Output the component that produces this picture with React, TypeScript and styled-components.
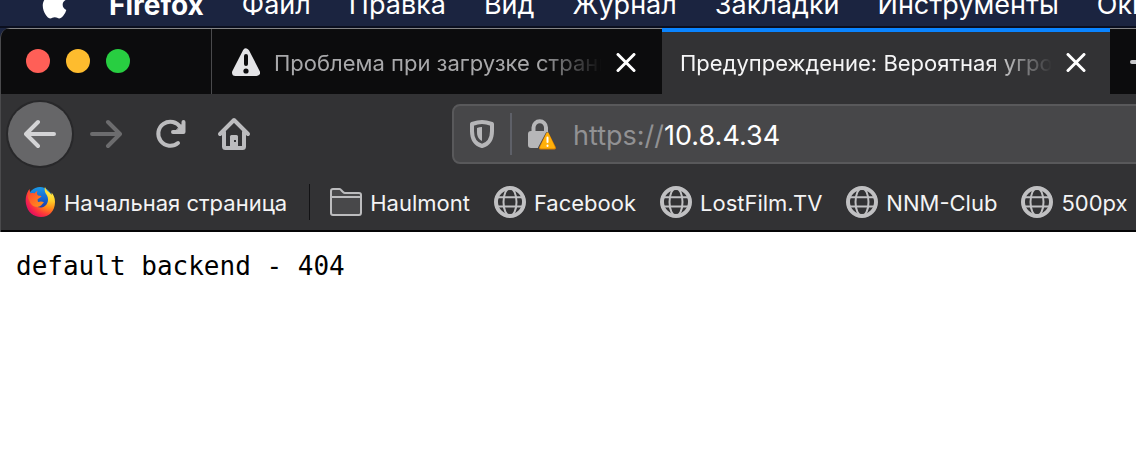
import React from "react";
import styled, { createGlobalStyle } from "styled-components";

const Global = createGlobalStyle`
  *, *::before, *::after { box-sizing: border-box; }
  body {
    margin: 0;
    background: #fff;
    font-family: Inter, "Noto Sans", "Liberation Sans", sans-serif;
  }
  button {
    padding: 0;
    border: 0;
    background: none;
    color: inherit;
    font: inherit;
  }
  a { color: inherit; text-decoration: none; }
  svg { display: block; flex: none; }
`;

const Screen = styled.div`
  overflow: hidden;
  background: #1b2440;
`;

const MenuBar = styled.nav`
  display: flex;
  align-items: flex-end;
  gap: 38px;
  height: 28px;
  padding: 0 0 5px 41px;
  overflow: hidden;
  background: #1b2440;
  border-bottom: 2px solid #0b0f1f;
  color: #fff;
`;

const MenuItem = styled.button<{ $bold?: boolean }>`
  flex: none;
  font-size: ${(p) => (p.$bold ? 28 : 27)}px;
  line-height: 32px;
  font-weight: ${(p) => (p.$bold ? 700 : 400)};
`;

const BrowserWindow = styled.div`
  overflow: hidden;
  border-left: 1px solid #4a4a4c;
  border-radius: 10px 0 0 0;
  background: #323234;
`;

const TabStrip = styled.div`
  display: flex;
  height: 66px;
  background: #0c0c0d;
  border-top: 1px solid #858587;
`;

const WindowControls = styled.div`
  display: flex;
  flex: none;
  align-items: center;
  gap: 16px;
  width: 211px;
  padding: 0 0 2px 25px;
  border-right: 1px solid #4a4a4c;
`;

const Light = styled.button<{ $color: string }>`
  width: 24px;
  height: 24px;
  border-radius: 50%;
  background: ${(p) => p.$color};
`;

const Tab = styled.div<{ $active?: boolean }>`
  display: flex;
  flex: 0 0 auto;
  align-items: center;
  gap: 14px;
  width: ${(p) => (p.$active ? 448 : 450)}px;
  margin-top: -1px;
  padding: ${(p) => (p.$active ? "0 24px 0 18px" : "3px 26px 0 20px")};
  border-top: ${(p) => (p.$active ? "4px solid #0a84ff" : "1px solid #858587")};
  background: ${(p) => (p.$active ? "#323234" : "#0c0c0d")};
  color: ${(p) => (p.$active ? "#f5f5f6" : "#a8a8aa")};
`;

const TabTitle = styled.button`
  flex: 1;
  min-width: 0;
  overflow: hidden;
  font-size: 22px;
  line-height: 32px;
  text-align: left;
  white-space: nowrap;
  mask-image: linear-gradient(to left, transparent, #000 64px);
`;

const IconButton = styled.button`
  display: flex;
  flex: none;
  color: #fff;
`;

const NewTab = styled(IconButton)`
  align-items: center;
  padding-left: 19px;
  color: #c8c8ca;
`;

const Toolbar = styled.div`
  display: flex;
  align-items: center;
  height: 80px;
  padding-left: 7px;
`;

const NavButtons = styled.div`
  display: flex;
  flex: none;
  align-items: center;
  width: 444px;
`;

const NavButton = styled.button<{ $round?: boolean; $muted?: boolean }>`
  display: flex;
  align-items: center;
  justify-content: center;
  width: 64px;
  height: 64px;
  margin-right: ${(p) => (p.$round ? 2 : 0)}px;
  border-radius: 50%;
  background: ${(p) => (p.$round ? "#666668" : "transparent")};
  box-shadow: ${(p) => (p.$round ? "0 0 0 2px #28282a" : "none")};
  color: ${(p) => (p.$muted ? "#6c6c6e" : p.$round ? "#d4d4d6" : "#bcbcbe")};
`;

const AddressBar = styled.div`
  display: flex;
  flex: 1;
  align-items: center;
  min-width: 0;
  height: 60px;
  margin-right: -8px;
  padding-left: 15px;
  border: 2px solid #59595b;
  border-radius: 8px;
  background: #474749;
`;

const AddressDivider = styled.span`
  width: 2px;
  height: 42px;
  margin: 0 15px 0 15px;
  background: #5e6068;
`;

const Scheme = styled.label`
  margin-left: 16px;
  padding-top: 4px;
  color: #919193;
  font-size: 27px;
  line-height: 36px;
`;

const Address = styled.input`
  flex: 1;
  min-width: 0;
  padding: 4px 0 0;
  border: 0;
  outline: 0;
  background: transparent;
  color: #fff;
  font: 27px/36px Inter, "Liberation Sans", sans-serif;
`;

const Bookmarks = styled.nav`
  display: flex;
  align-items: center;
  gap: 24px;
  height: 58px;
  padding-left: 24px;
  overflow: hidden;
  border-bottom: 2px solid #050506;
`;

const Bookmark = styled.a`
  display: flex;
  flex: none;
  align-items: center;
  gap: 8px;
  color: #f4f4f5;
  font-size: 22px;
  line-height: 32px;
`;

const BookmarkLabel = styled.span`
  padding-top: 2px;
`;

const BookmarkDivider = styled.span`
  flex: none;
  width: 1px;
  height: 36px;
  margin: 0 -4px 0 -2px;
  background: #121214;
`;

const Content = styled.main`
  min-height: calc(100vh - 232px);
  padding: 16px;
  background: #fff;
`;

const Message = styled.pre`
  margin: 0;
  color: #000;
  font: 26px/36px "DejaVu Sans Mono", "Liberation Mono", monospace;
`;

const AppleLogo = () => (
  <svg width="30" height="32" viewBox="0 0 32 34" fill="#fff" aria-hidden="true">
    <path d="M20.4 1c.2 2-.6 3.800-1.700 5.100-1.200 1.400-2.900 2.300-4.600 2.200-.2-1.900.7-3.800 1.700-5 1.200-1.300 3.100-2.200 4.600-2.300z" />
    <path d="M26.200 11.700c-2 1.200-3.100 3-3.100 5.100 0 2.500 1.500 4.500 3.900 5.500-.6 2-1.500 3.700-2.700 5.400-1.300 1.900-2.600 3.600-4.700 3.600-2 0-2.600-1.200-4.900-1.200s-3 1.200-4.900 1.300c-2 .1-3.500-2-4.800-3.900C2.300 23.600.5 16.700 3.200 12.200c1.300-2.300 3.700-3.700 6.200-3.700 2.100 0 3.700 1.300 5.200 1.300 1.400 0 3.500-1.500 6-1.300 1.100 0 3.800.4 5.600 3.200z" />
  </svg>
);

const WarningIcon = () => (
  <svg width="28" height="30" viewBox="0 0 28 30" aria-hidden="true">
    <path d="M14 4L24.500 24.500H3.500Z" fill="#e4e4e6" stroke="#e4e4e6" strokeWidth="7" strokeLinejoin="round" />
    <path d="M14 8V16" stroke="#0c0c0d" strokeWidth="4" strokeLinecap="round" />
    <circle cx="14" cy="23" r="2.600" fill="#0c0c0d" />
  </svg>
);

const CloseIcon = () => (
  <svg width="20" height="20" viewBox="0 0 20 20" stroke="currentColor" strokeWidth="3" strokeLinecap="round" aria-hidden="true">
    <path d="M2 1.500L18 17.500M18 1.500L2 17.500" />
  </svg>
);

const PlusIcon = () => (
  <svg width="26" height="26" viewBox="0 0 26 26" stroke="currentColor" strokeWidth="4" strokeLinecap="round" aria-hidden="true">
    <path d="M3 13H24M13 2V24" />
  </svg>
);

const ArrowIcon = ({ forward }: { forward?: boolean }) => (
  <svg width="32" height="32" viewBox="0 0 32 32" fill="none" stroke="currentColor" strokeWidth="4" strokeLinecap="round" strokeLinejoin="round" aria-hidden="true">
    <path d={forward ? "M2 16H29M18 4L30 16L18 28" : "M30 16H3M14 4L2 16L14 28"} />
  </svg>
);

const ReloadIcon = () => (
  <svg width="32" height="32" viewBox="0 0 32 32" fill="none" stroke="currentColor" strokeLinecap="round" strokeLinejoin="round" aria-hidden="true">
    <path d="M24 25A12 12 0 1 1 26.500 9.500" strokeWidth="4" />
    <path d="M29.500 4V14H19" strokeWidth="4" />
    <path d="M27.500 7L29 14H21Z" fill="currentColor" strokeWidth="1" />
  </svg>
);

const HomeIcon = () => (
  <svg width="34" height="34" viewBox="0 0 34 34" fill="none" stroke="currentColor" strokeLinecap="round" strokeLinejoin="round" aria-hidden="true">
    <path d="M3 17L17 3L31 17" strokeWidth="4" />
    <path d="M7 15V29.500Q7 31 8.500 31H25.500Q27 31 27 29.500V15" strokeWidth="4" />
    <path d="M13 32V19.500Q13 18 14.500 18H19.500Q21 18 21 19.500V32Z" fill="currentColor" stroke="none" />
    <rect x="17" y="23" width="2" height="2" fill="#323234" stroke="none" />
  </svg>
);

const ShieldIcon = () => (
  <svg width="26" height="30" viewBox="0 0 26 30" fill="none" aria-hidden="true">
    <path d="M13 3C9 3 6 4 3 5V12C3 19 6 25 13 27C20 25 23 19 23 12V5C20 4 17 3 13 3Z" stroke="#b6b6b8" strokeWidth="4" strokeLinejoin="round" />
    <path d="M13 8Q10 8 8 9V13C8 17 9.500 20.500 13 22Z" fill="#b6b6b8" />
  </svg>
);

const LockIcon = () => (
  <svg width="30" height="32" viewBox="0 0 30 32" fill="none" aria-hidden="true">
    <path d="M6.500 15V9.500A6 6 0 0 1 19 9.500V15" stroke="#b6b6b8" strokeWidth="4" />
    <rect x="1" y="13" width="21" height="17" rx="3" fill="#b6b6b8" />
    <path d="M20.500 16L28 30H13Z" fill="#474749" stroke="#474749" strokeWidth="4" strokeLinejoin="round" />
    <path d="M20.500 16L27.500 30H13.500Z" fill="#ffab0a" stroke="#d97e00" strokeWidth="3" strokeLinejoin="round" />
    <path d="M20.500 15.500L27 29.500H14Z" fill="#ffb00a" stroke="#ffb00a" strokeWidth="2" strokeLinejoin="round" />
    <path d="M20.500 19.500V24M20.500 27.500V28" stroke="#fff" strokeWidth="2" strokeLinecap="round" />
  </svg>
);

const FirefoxIcon = () => (
  <svg width="31" height="32" viewBox="0 0 31 32" aria-hidden="true">
    <defs>
      <radialGradient id="fxBody" cx="0.9" cy="0.12" r="1">
        <stop offset="0" stopColor="#fff44f" />
        <stop offset="0.35" stopColor="#ffd02a" />
        <stop offset="0.6" stopColor="#ff8a18" />
        <stop offset="0.82" stopColor="#ff3a38" />
        <stop offset="1" stopColor="#e8145a" />
      </radialGradient>
      <linearGradient id="fxGlobe" x1="0" y1="0" x2="0" y2="1">
        <stop offset="0" stopColor="#1a9ae8" />
        <stop offset="0.6" stopColor="#1458c8" />
        <stop offset="1" stopColor="#352a92" />
      </linearGradient>
      <linearGradient id="fxFace" x1="0" y1="0" x2="1" y2="1">
        <stop offset="0" stopColor="#ff4032" />
        <stop offset="1" stopColor="#ff9a18" />
      </linearGradient>
    </defs>
    <circle cx="15" cy="13" r="12" fill="url(#fxGlobe)" />
    <path d="M20 0.500C19 5 20.500 7 22 9.500C24.500 14 22.500 20.500 16.500 21.500C11 22 7 18 7 13C7 10 5 8 4.500 3C1.500 7 0 12 1 18C2.500 26 8.500 31 16 31C24 31 30 25 30 16C30 12 28.500 8.500 26.500 6.500L26.700 9C25 6 20.500 4.500 20 0.500Z" fill="url(#fxBody)" />
    <path d="M3.500 4.500L4.500 8C6 6.800 8 7 9.500 7.500C10.500 5.800 11.500 5.300 12.500 5C11.500 7 12 8.500 13 9.500L16.500 10C16 11.800 14 12 12.500 13.500L13 16C15 15.500 17 15 19 16.500C17.500 17 17 19.500 14.500 20.500C10 22 5.500 19 4.500 15C2.500 12 2 8 3.500 4.500Z" fill="url(#fxFace)" />
  </svg>
);

const FolderIcon = () => (
  <svg width="32" height="30" viewBox="0 0 32 30" fill="#48484a" stroke="#bcbcbe" strokeWidth="2" strokeLinejoin="round" aria-hidden="true">
    <path d="M1 4Q1 2 3 2H9.500Q10.500 2 11.500 3.500L13 5Q14 6 15 6H29Q31 6 31 8V25.500Q31 28 29 28H3Q1 28 1 26Z" />
    <path d="M1 10H31" />
  </svg>
);

const GlobeIcon = () => (
  <svg width="32" height="32" viewBox="0 0 32 32" fill="none" stroke="#c0c0c2" aria-hidden="true">
    <circle cx="16" cy="16" r="14" strokeWidth="4" />
    <ellipse cx="16" cy="16" rx="6.500" ry="14" strokeWidth="2" />
    <path d="M3 11.300H29M3 20.500H29" strokeWidth="2" />
  </svg>
);

const menus = ["Файл", "Правка", "Вид", "Журнал", "Закладки", "Инструменты", "Окно"];
const lights = [
  { label: "Закрыть", color: "#ff5f57" },
  { label: "Свернуть", color: "#febc2e" },
  { label: "Развернуть", color: "#28ce41" },
];
const sites = ["Facebook", "LostFilm.TV", "NNM-Club", "500px"];

export default function App() {
  return (
    <Screen>
      <Global />
      <MenuBar>
        <AppleLogo />
        <MenuItem $bold>Firefox</MenuItem>
        {menus.map((name) => (
          <MenuItem key={name}>{name}</MenuItem>
        ))}
      </MenuBar>
      <BrowserWindow>
        <TabStrip>
          <WindowControls>
            {lights.map((l) => (
              <Light key={l.label} aria-label={l.label} $color={l.color} />
            ))}
          </WindowControls>
          <Tab>
            <WarningIcon />
            <TabTitle>Проблема при загрузке страницы</TabTitle>
            <IconButton aria-label="Закрыть вкладку"><CloseIcon /></IconButton>
          </Tab>
          <Tab $active>
            <TabTitle>Предупреждение: Вероятная угроза</TabTitle>
            <IconButton aria-label="Закрыть вкладку"><CloseIcon /></IconButton>
          </Tab>
          <NewTab aria-label="Новая вкладка"><PlusIcon /></NewTab>
        </TabStrip>
        <Toolbar>
          <NavButtons>
            <NavButton $round aria-label="Назад"><ArrowIcon /></NavButton>
            <NavButton $muted aria-label="Вперёд"><ArrowIcon forward /></NavButton>
            <NavButton aria-label="Обновить"><ReloadIcon /></NavButton>
            <NavButton aria-label="Домой"><HomeIcon /></NavButton>
          </NavButtons>
          <AddressBar>
            <ShieldIcon />
            <AddressDivider />
            <LockIcon />
            <Scheme htmlFor="address">https://</Scheme>
            <Address id="address" type="text" defaultValue="10.8.4.34" />
          </AddressBar>
        </Toolbar>
        <Bookmarks>
          <Bookmark href="#home"><FirefoxIcon /><BookmarkLabel>Начальная страница</BookmarkLabel></Bookmark>
          <BookmarkDivider />
          <Bookmark href="#haulmont"><FolderIcon /><BookmarkLabel>Haulmont</BookmarkLabel></Bookmark>
          {sites.map((name) => (
            <Bookmark key={name} href={"#" + name}><GlobeIcon /><BookmarkLabel>{name}</BookmarkLabel></Bookmark>
          ))}
        </Bookmarks>
      </BrowserWindow>
      <Content>
        <Message>default backend - 404</Message>
      </Content>
    </Screen>
  );
}
